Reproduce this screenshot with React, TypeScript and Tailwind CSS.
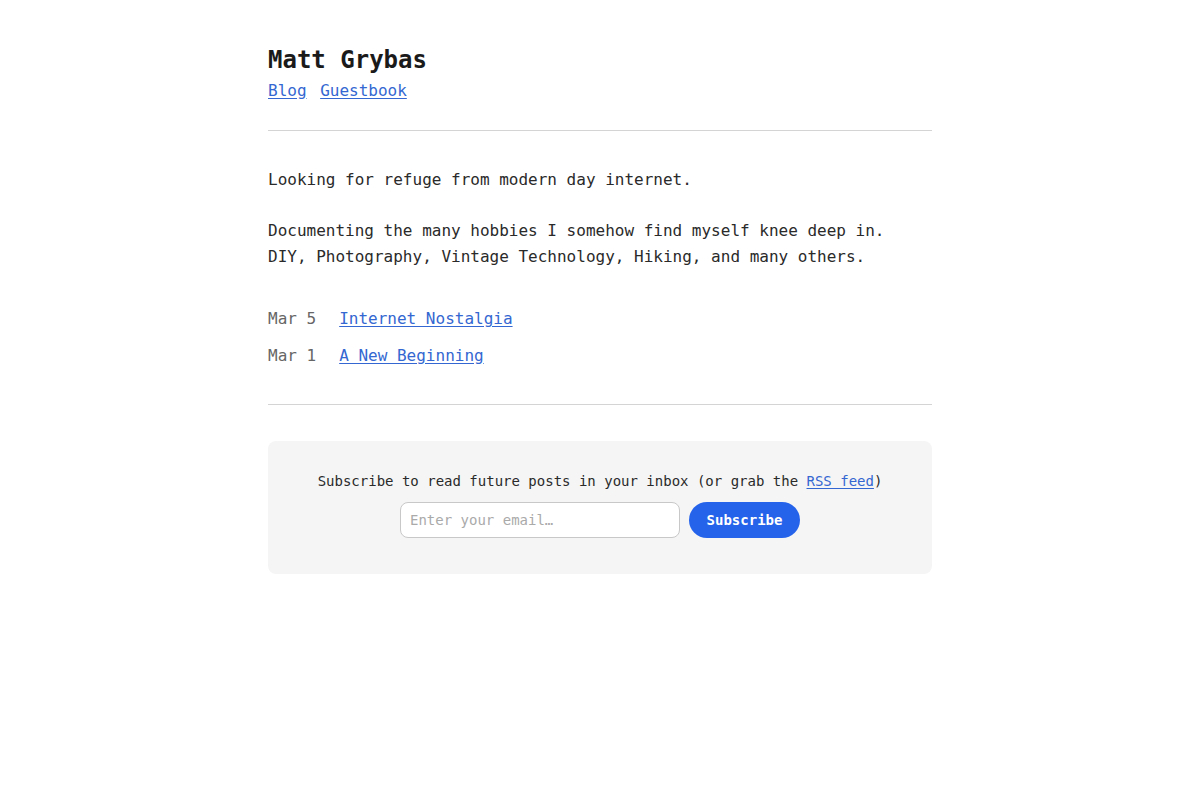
import React from "react";

const posts = [
  { date: "Mar 5", title: "Internet Nostalgia" },
  { date: "Mar 1", title: "A New Beginning" },
];

export default function App() {
  return (
    <div className="min-h-screen bg-white text-[#2a2a2a] font-['DejaVu_Sans_Mono','Liberation_Mono',monospace]">
      <div className="mx-auto w-[664px] pt-[46px]">
        {/* Header */}
        <header>
          <h1 className="text-[24px] leading-[29px] font-bold text-[#1a1a1a]">
            Matt Grybas
          </h1>
          <nav className="mt-[3px] flex gap-[13.6px] text-[16px] leading-[26px]">
            <a href="#" className="text-[#3467d1] underline underline-offset-2">
              Blog
            </a>
            <a href="#" className="text-[#3467d1] underline underline-offset-2">
              Guestbook
            </a>
          </nav>
        </header>

        <hr className="mt-[26px] border-0 border-t border-[#d4d4d4]" />

        {/* Intro */}
        <div className="mt-[36px] text-[16px] leading-[26px]">
          <p>Looking for refuge from modern day internet.</p>
          <p className="mt-[25px]">
            Documenting the many hobbies I somehow find myself knee deep in.
            <br />
            DIY, Photography, Vintage Technology, Hiking, and many others.
          </p>
        </div>

        {/* Posts */}
        <ul className="mt-[36px] flex flex-col gap-[11px] text-[16px] leading-[26px]">
          {posts.map((p) => (
            <li key={p.title} className="flex gap-[23px]">
              <span className="text-[#666]">{p.date}</span>
              <a href="#" className="text-[#3467d1] underline underline-offset-2">
                {p.title}
              </a>
            </li>
          ))}
        </ul>

        <hr className="mt-[35px] border-0 border-t border-[#d4d4d4]" />

        {/* Subscribe */}
        <div className="mt-[36px] rounded-lg bg-[#f5f5f5] pt-[30px] pb-[36px] flex flex-col items-center">
          <p className="text-[14px] leading-[20px]">
            Subscribe to read future posts in your inbox (or grab the{" "}
            <a href="#" className="text-[#3467d1] underline underline-offset-2">
              RSS feed
            </a>
            )
          </p>
          <form className="mt-[11px] flex gap-[9px]" onSubmit={(e) => e.preventDefault()}>
            <input
              type="email"
              placeholder="Enter your email…"
              className="w-[280px] h-[36px] rounded-lg border border-[#c8c8c8] bg-white px-[9px] text-[14px] placeholder:text-[#aaa] outline-none"
            />
            <button
              type="submit"
              className="w-[111px] h-[36px] rounded-full bg-[#2563eb] text-white text-[14px] font-bold"
            >
              Subscribe
            </button>
          </form>
        </div>
      </div>
    </div>
  );
}
